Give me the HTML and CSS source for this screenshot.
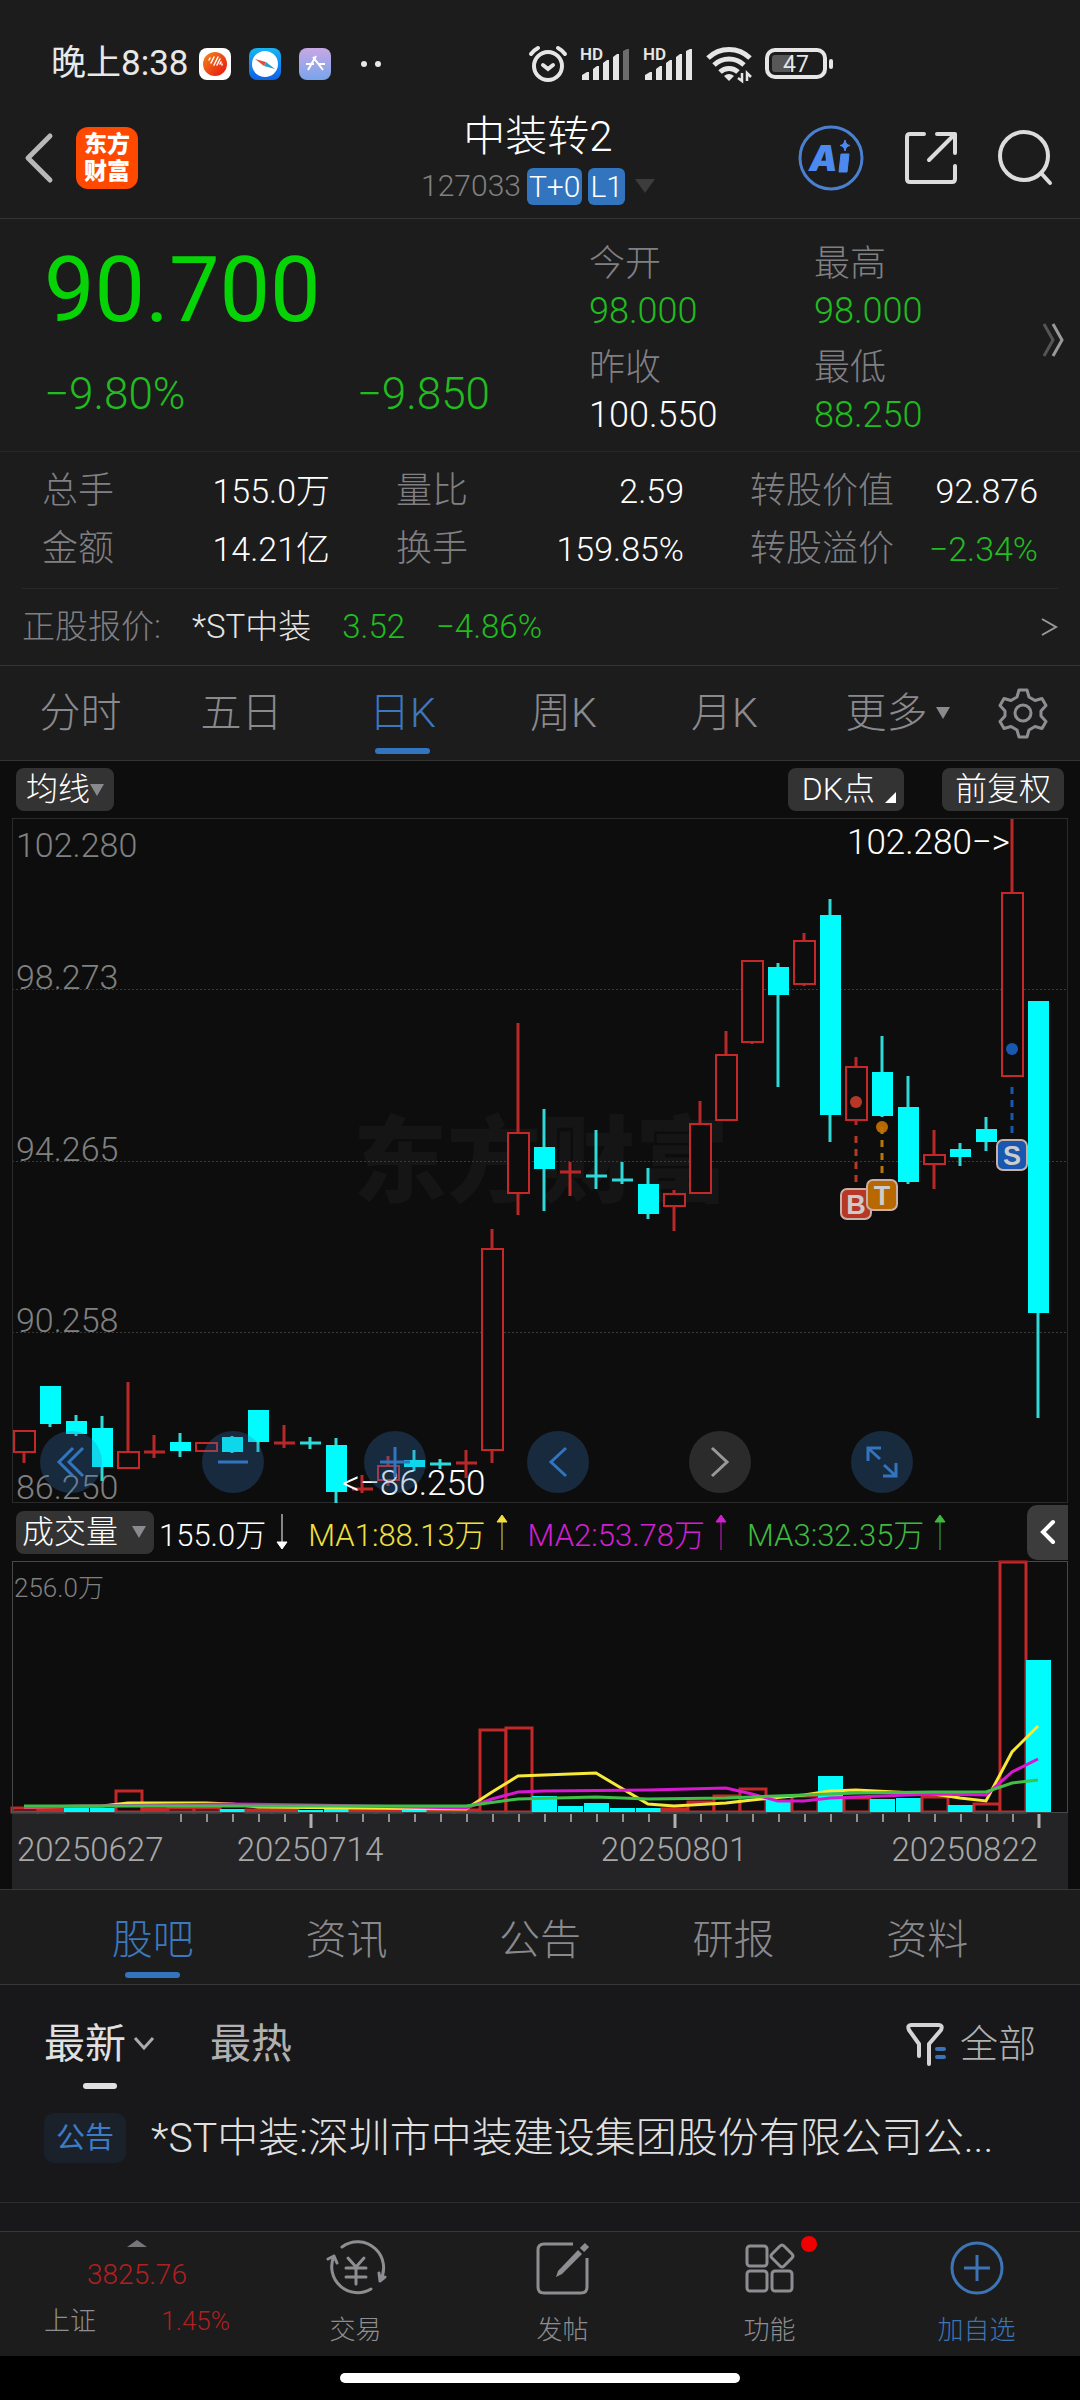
FILE: index.html
```html
<!DOCTYPE html>
<html lang="zh-CN">
<head>
  <meta charset="UTF-8">
  <meta name="viewport" content="width=device-width, initial-scale=1.0">
  <title>中装转2 127033</title>
  <link rel="stylesheet" href="styles.css">
</head>
<body>
  <div class="status-bar">
    <span class="clock">晚上8:38</span>
    <div class="status-apps">
      <svg width="32" height="32" viewBox="0 0 32 32">
        <defs>
          <linearGradient id="gOrange" x1="0" y1="0" x2="1" y2="1"><stop offset="0" stop-color="#f28a1a"/><stop offset="1" stop-color="#e81010"/></linearGradient>
          <linearGradient id="gBlue" x1="0" y1="0" x2="0" y2="1"><stop offset="0" stop-color="#18b4f4"/><stop offset="1" stop-color="#1060e8"/></linearGradient>
          <linearGradient id="gPurple" x1="0" y1="0" x2="0" y2="1"><stop offset="0" stop-color="#c8a8e4"/><stop offset="1" stop-color="#78a4ec"/></linearGradient>
        </defs>
        <rect width="32" height="32" rx="8" fill="#fff"/>
        <circle cx="16" cy="16" r="12" fill="url(#gOrange)"/>
        <path d="M10 12l1-2M12 15l3-6M15 17l4-8M18 17l3-6M21 16l1-2M23 17l0-1" stroke="#fff" stroke-width="1.5" stroke-linecap="round"/>
      </svg>
      <svg width="32" height="32" viewBox="0 0 32 32">
        <rect width="32" height="32" rx="8" fill="url(#gBlue)"/>
        <circle cx="16" cy="16" r="13" fill="#fff"/>
        <path d="M6 11l11 3-2 4z" fill="#e05040"/>
        <path d="M26 21l-11-3 2-4z" fill="#28a0c8"/>
      </svg>
      <svg width="32" height="32" viewBox="0 0 32 32">
        <rect width="32" height="32" rx="8" fill="url(#gPurple)"/>
        <path d="M17 8l-8 14M14 9l10 13M7 16h8M19 16h7" stroke="#fff" stroke-width="2" fill="none"/>
      </svg>
      <svg class="more-dots" width="20" height="32" viewBox="0 0 20 32" fill="#e8e8e8"><circle cx="3" cy="16" r="3"/><circle cx="17" cy="16" r="3"/></svg>
    </div>
    <div class="status-icons">
      <svg width="38" height="38" viewBox="0 0 38 38" fill="none" stroke="#e6e6e6" stroke-width="4" stroke-linecap="round">
        <circle cx="19" cy="21" r="14"/>
        <path d="M2 9a21 21 0 0 1 7-6M36 9a21 21 0 0 0-7-6M14 20l5 4 5-4"/>
      </svg>
      <svg width="50" height="34" viewBox="0 0 50 34" fill="#e6e6e6">
        <text x="0" y="13" class="hd">HD</text>
        <path d="M2 33v-5l5-3h2v8zM13 33V22l4-3h2v14zM23 33V16l4-3h2v20zM33 33V10l4-3h2v26z"/>
        <path d="M43 33V4l4-2h2v31z" fill="#6c6c6c"/>
      </svg>
      <svg width="50" height="34" viewBox="0 0 50 34" fill="#e6e6e6">
        <text x="0" y="13" class="hd">HD</text>
        <path d="M2 33v-5l5-3h2v8zM13 33V22l4-3h2v14zM23 33V16l4-3h2v20zM33 33V10l4-3h2v26zM43 33V4l4-2h2v31z"/>
      </svg>
      <svg width="46" height="36" viewBox="0 0 46 36" fill="none" stroke="#e6e6e6" stroke-width="5">
        <path d="M2 12a30 30 0 0 1 42 0M8 19a22 22 0 0 1 30 0M14 26a13 13 0 0 1 18 0"/>
        <path d="M18 30q5-4 10 0l-5 5z" fill="#e6e6e6" stroke="none"/>
        <path d="M36 27v8l-4-3M41 35v-8l4 4" stroke-width="2.500"/>
      </svg>
      <svg width="70" height="32" viewBox="0 0 70 32">
        <rect x="2" y="2" width="58" height="27" rx="8" fill="none" stroke="#e6e6e6" stroke-width="4"/>
        <path d="M7 10q0-3 3-3h15v17H10q-3 0-3-3z" fill="#585858"/>
        <rect x="64" y="11" width="4" height="10" rx="2" fill="#e6e6e6"/>
        <text x="31" y="24" class="battery-level">47</text>
      </svg>
    </div>
  </div>

  <header class="header">
    <div class="header-left">
      <button class="icon-btn" aria-label="返回">
        <svg width="30" height="52" viewBox="0 0 30 52" fill="none" stroke="#b8b8b8" stroke-width="5" stroke-linecap="round" stroke-linejoin="round"><path d="M26 4L4 26l22 22"/></svg>
      </button>
      <a class="logo" href="#" aria-label="东方财富"><span>东方</span><span>财富</span></a>
    </div>
    <div class="header-title">
      <h1>中装转2</h1>
      <div class="code">
        <span>127033</span>
        <span class="badge">T+0</span>
        <span class="badge">L1</span>
        <svg width="20" height="14" viewBox="0 0 20 14"><path d="M0 0h20L10 14z" fill="#3c3c3c"/></svg>
      </div>
    </div>
    <div class="header-right">
      <button class="icon-btn" aria-label="AI">
        <svg width="66" height="66" viewBox="0 0 66 66">
          <circle cx="33" cy="33" r="31" fill="none" stroke="#4b7fd0" stroke-width="3"/>
          <text x="11" y="46" class="ai">A</text>
          <path d="M43 29h8l-2 18h-8z" fill="#4d8af0" stroke="#4d8af0" stroke-linejoin="round"/>
          <path d="M47 15q1 5 5 5.500-4 .5-5 5.500-1-5-5-5.500 4-.5 5-5.500z" fill="#4d8af0" stroke="#4d8af0"/>
        </svg>
      </button>
      <button class="icon-btn" aria-label="分享">
        <svg width="54" height="54" viewBox="0 0 54 54" fill="none" stroke="#dcdcdc" stroke-width="4" stroke-linecap="round" stroke-linejoin="round"><path d="M20 3H6q-3 0-3 3v42q0 3 3 3h42q3 0 3-3V35M33 3h18v19M51 3L25 29"/></svg>
      </button>
      <button class="icon-btn" aria-label="搜索">
        <svg width="54" height="56" viewBox="0 0 54 56" fill="none" stroke="#dcdcdc" stroke-width="4" stroke-linecap="round"><circle cx="26" cy="26" r="24"/><path d="M43 43l9 10"/></svg>
      </button>
    </div>
  </header>

  <section class="quote">
    <div class="quote-main">
      <div class="price">90.700</div>
      <div class="change"><span>−9.80%</span><span>−9.850</span></div>
    </div>
    <dl class="quote-side">
      <div><dt>今开</dt><dd class="green">98.000</dd></div>
      <div><dt>最高</dt><dd class="green">98.000</dd></div>
      <div><dt>昨收</dt><dd>100.550</dd></div>
      <div><dt>最低</dt><dd class="green">88.250</dd></div>
    </dl>
    <button class="icon-btn" aria-label="更多行情">
      <svg width="24" height="34" viewBox="0 0 24 34" fill="none" stroke-width="3"><path d="M2 1l9 16-9 16" stroke="#555"/><path d="M11 1l9 16-9 16" stroke="#999"/></svg>
    </button>
  </section>

  <dl class="stats">
    <div><dt>总手</dt><dd>155.0万</dd></div>
    <div><dt>量比</dt><dd>2.59</dd></div>
    <div><dt>转股价值</dt><dd>92.876</dd></div>
    <div><dt>金额</dt><dd>14.21亿</dd></div>
    <div><dt>换手</dt><dd>159.85%</dd></div>
    <div><dt>转股溢价</dt><dd class="green">−2.34%</dd></div>
  </dl>

  <a class="underlying" href="#">
    <span class="underlying-label">正股报价:</span>
    <span class="underlying-name">*ST中装</span>
    <span class="green">3.52</span>
    <span class="green">−4.86%</span>
    <svg width="17" height="18" viewBox="0 0 17 18" fill="none" stroke="#999" stroke-width="2"><path d="M1 1l14 8-14 8"/></svg>
  </a>

  <nav class="periods">
    <button>分时</button>
    <button>五日</button>
    <button class="active">日K</button>
    <button>周K</button>
    <button>月K</button>
    <button class="period-more">更多<svg width="14" height="12" viewBox="0 0 14 12"><path d="M0 0h14L7 12z" fill="#8a8a8e"/></svg></button>
    <button class="settings" aria-label="设置">
      <svg width="50" height="50" viewBox="0 0 50 50" fill="none" stroke="#8e8e92" stroke-width="3" stroke-linejoin="round">
        <path d="M21 2h8l2 7 6 3.500 7-2 4 7-5 5.500v5l5 5.500-4 7-7-2-6 3.500-2 7h-8l-2-7-6-3.500-7 2-4-7 5-5.500v-5l-5-5.500 4-7 7 2 6-3.500z"/>
        <circle cx="25" cy="25" r="8"/>
      </svg>
    </button>
  </nav>

  <main class="chart">
    <div class="chart-toolbar">
      <button class="chip">均线<svg width="14" height="12" viewBox="0 0 14 12"><path d="M0 0h14L7 12z" fill="#8a8a8e"/></svg></button>
      <button class="chip chip-dk">DK点<svg width="11" height="11" viewBox="0 0 11 11"><path d="M11 0v11H0z" fill="#fff"/></svg></button>
      <button class="chip chip-adjust">前复权</button>
    </div>

    <div class="kline">
      <svg id="kline" viewBox="0 0 1056 685">
        <text x="341" y="377" class="watermark">东方财富</text>
        <path class="grid" d="M0 171.500h1056M0 343.500h1056M0 514.500h1056"/>
        <rect class="frame" x="0.5" y="0.5" width="1055" height="684"/>
        <g class="axis-label">
          <text x="4" y="39">102.280</text>
          <text x="4" y="171">98.273</text>
          <text x="4" y="343">94.265</text>
          <text x="4" y="514">90.258</text>
          <text x="4" y="681">86.250</text>
        </g>
        <g id="candles"></g>
        <g class="marker marker-b">
          <circle cx="844" cy="284" r="6"/>
          <path d="M844 318v52"/>
          <rect x="829" y="371" width="30" height="30" rx="6"/>
          <text x="844" y="396">B</text>
        </g>
        <g class="marker marker-t">
          <circle cx="870" cy="309" r="6"/>
          <path d="M870 309v52"/>
          <rect x="855" y="362" width="30" height="30" rx="6"/>
          <text x="870" y="387">T</text>
        </g>
        <g class="marker marker-s">
          <circle cx="1000" cy="231" r="6"/>
          <path d="M1000 269v52"/>
          <rect x="985" y="322" width="30" height="30" rx="6"/>
          <text x="1000" y="347">S</text>
        </g>
        <text x="998" y="36" class="peak peak-high">102.280−&gt;</text>
        <text x="330" y="677" class="peak">&lt;−86.250</text>
      </svg>
      <div class="chart-controls">
        <button aria-label="最前"><svg width="28" height="30" viewBox="0 0 28 30"><path d="M16 1L2 15l14 14M26 1L12 15l14 14"/></svg></button>
        <button aria-label="缩小"><svg width="30" height="30" viewBox="0 0 30 30"><path d="M0 15h30"/></svg></button>
        <button aria-label="放大"><svg width="30" height="30" viewBox="0 0 30 30"><path d="M0 15h30M15 0v30"/></svg></button>
        <button aria-label="左移"><svg width="20" height="30" viewBox="0 0 20 30"><path d="M18 1L3 15l15 14"/></svg></button>
        <button class="disabled" aria-label="右移"><svg width="20" height="30" viewBox="0 0 20 30"><path d="M2 1l15 14L2 29"/></svg></button>
        <button aria-label="全屏"><svg width="32" height="32" viewBox="0 0 32 32"><path d="M2 15V2h13M2 2l12 11M30 17v13H17M30 30L18 19"/></svg></button>
      </div>
    </div>

    <div class="volume-legend">
      <button class="chip chip-volume">成交量<svg width="14" height="12" viewBox="0 0 14 12"><path d="M0 0h14L7 12z" fill="#8a8a8e"/></svg></button>
      <span>155.0万<svg width="12" height="36" viewBox="0 0 12 36"><path d="M6 0v34M1 28l5 7 5-7z"/></svg></span>
      <span class="ma1">MA1:88.13万<svg width="12" height="36" viewBox="0 0 12 36"><path d="M6 36V2M1 8l5-7 5 7z"/></svg></span>
      <span class="ma2">MA2:53.78万<svg width="12" height="36" viewBox="0 0 12 36"><path d="M6 36V2M1 8l5-7 5 7z"/></svg></span>
      <span class="ma3">MA3:32.35万<svg width="12" height="36" viewBox="0 0 12 36"><path d="M6 36V2M1 8l5-7 5 7z"/></svg></span>
      <button class="collapse" aria-label="展开">
        <svg width="16" height="26" viewBox="0 0 16 26" fill="none" stroke="#fff" stroke-width="4" stroke-linecap="round"><path d="M13 3L3 13l10 10"/></svg>
      </button>
    </div>

    <svg class="volume" viewBox="0 0 1056 328">
      <rect class="axis-bg" x="0" y="252" width="1056" height="76"/>
      <g id="volumes"></g>
      <rect class="frame frame-volume" x="0.5" y="0.5" width="1055" height="251"/>
      <text x="2" y="36" class="volume-max">256.0万</text>
      <g id="averages"></g>
      <g id="ticks"></g>
      <g class="dates">
        <text x="5" y="300">20250627</text>
        <text x="298" y="300" text-anchor="middle">20250714</text>
        <text x="662" y="300" text-anchor="middle">20250801</text>
        <text x="1026" y="300" text-anchor="end">20250822</text>
      </g>
    </svg>
  </main>

  <nav class="sections">
    <a class="active" href="#">股吧</a>
    <a href="#">资讯</a>
    <a href="#">公告</a>
    <a href="#">研报</a>
    <a href="#">资料</a>
  </nav>

  <section class="feed">
    <div class="feed-tabs">
      <button class="active">最新<svg width="20" height="13" viewBox="0 0 20 13" fill="none" stroke="#aaa" stroke-width="3"><path d="M1 1l9 10 9-10"/></svg></button>
      <button>最热</button>
      <button class="filter">
        <svg width="40" height="44" viewBox="0 0 40 44" fill="none" stroke="#d4d4d4" stroke-width="4" stroke-linecap="round" stroke-linejoin="round">
          <path d="M13 34V22L3 8q-2-5 2-5h28q4 0 2 5L23 22v20"/>
          <path d="M31 27h7M31 35h7" stroke="#3a74b8"/>
        </svg>全部
      </button>
    </div>
    <a class="feed-item" href="#">
      <span class="tag">公告</span>
      <span class="feed-title">*ST中装:深圳市中装建设集团股份有限公司公...</span>
    </a>
  </section>

  <nav class="bottom-nav">
    <a class="index" href="#">
      <svg width="20" height="7" viewBox="0 0 20 7"><path d="M0 7L10 0l10 7z" fill="#77777b"/></svg>
      <span class="red">3825.76</span>
      <span class="index-row"><span>上证</span><span class="red">1.45%</span></span>
    </a>
    <a href="#">
      <svg width="60" height="56" viewBox="0 0 60 56" fill="none" stroke="#8e8e92" stroke-width="3" stroke-linecap="round">
        <path d="M16 7a26 26 0 0 1 38 34M54 41l5-4M54 41l-1-8M45 49A26 26 0 0 1 8 16M8 16l-6 3M8 16l3 7"/>
        <path d="M22 18l8 9 8-9M20 28h20M20 37h20M30 28v16"/>
      </svg>
      <span>交易</span>
    </a>
    <a href="#">
      <svg width="54" height="56" viewBox="0 0 54 56" fill="none" stroke="#8e8e92" stroke-width="3">
        <path d="M37 4H8q-6 0-6 6v37q0 6 6 6h37q6 0 6-6V18"/>
        <path d="M42 10L22 31l-2 6 6-3 20-20z" fill="#8e8e92" stroke="none"/>
        <path d="M46 10l5-5" stroke-width="6"/>
      </svg>
      <span>发帖</span>
    </a>
    <a href="#">
      <span class="icon-wrap">
        <svg width="50" height="56" viewBox="0 0 50 56" fill="none" stroke="#8e8e92" stroke-width="3">
          <rect x="2" y="6" width="20" height="20" rx="3"/>
          <rect x="2" y="31" width="20" height="20" rx="3"/>
          <rect x="27" y="31" width="20" height="20" rx="3"/>
          <path d="M35 6q2-2 4 0l8 8q2 2 0 4l-8 8q-2 2-4 0l-8-8q-2-2 0-4z"/>
        </svg>
        <i class="dot"></i>
      </span>
      <span>功能</span>
    </a>
    <a class="add" href="#">
      <svg width="54" height="56" viewBox="0 0 54 56" fill="none" stroke="#3d74b5" stroke-width="3"><circle cx="27" cy="28" r="25"/><path d="M14 28h26M27 15v26"/></svg>
      <span>加自选</span>
    </a>
  </nav>
  <div class="home-bar"><span></span></div>

  <script src="script.js"></script>
</body>
</html>
```
FILE: styles.css
```css
* {
  margin: 0;
  padding: 0;
  box-sizing: border-box;
}

body {
  font-family: Roboto, "Noto Sans CJK SC", sans-serif;
  font-weight: 300;
  background: #1c1c1c;
  color: #fff;
  min-height: 100vh;
  display: flex;
  flex-direction: column;
}

button {
  font: inherit;
  color: inherit;
  background: none;
  border: none;
  cursor: pointer;
}

a {
  color: inherit;
  text-decoration: none;
}

svg {
  display: block;
  flex-shrink: 0;
  overflow: visible;
}

.green {
  color: #20bc20;
}

.red {
  color: #b02020;
}

/* Status bar */
.status-bar {
  display: flex;
  align-items: center;
  padding: 40px 245px 0 51px;
  height: 88px;
  color: #e8e8e8;
}

.clock {
  font-size: 35px;
  line-height: 48px;
  font-weight: 400;
}

.status-apps {
  display: flex;
  gap: 18px;
  margin-left: 10px;
}

.more-dots {
  margin-left: 12px;
}

.status-icons {
  display: flex;
  align-items: center;
  gap: 13px;
  margin-left: auto;
}

.hd {
  font-size: 17px;
  font-weight: 600;
}

.battery-level {
  font-size: 23px;
  font-weight: 400;
  fill: #e6e6e6;
  text-anchor: middle;
}

/* Header */
.header {
  display: grid;
  grid-template-columns: 1fr auto 1fr;
  align-items: center;
  padding: 21px 28px 11px 24px;
  border-bottom: 1px solid #333;
}

.header-left,
.header-right {
  display: flex;
  align-items: center;
}

.header-left {
  gap: 22px;
}

.header-right {
  justify-content: flex-end;
  gap: 40px;
}

.logo {
  display: flex;
  flex-direction: column;
  justify-content: center;
  align-items: center;
  width: 62px;
  height: 62px;
  border-radius: 12px;
  background: #ff4800;
  font-size: 23px;
  line-height: 27px;
  font-weight: 900;
}

.header-title h1 {
  font-size: 42px;
  line-height: 56px;
  font-weight: 300;
  text-align: center;
}

.code {
  display: flex;
  align-items: center;
  gap: 6px;
  font-size: 30px;
  line-height: 42px;
  color: #808080;
}

.badge {
  padding: 0 2px;
  border-radius: 6px;
  background: #3275be;
  color: #fff;
  line-height: 37px;
}

.code svg {
  margin-left: 4px;
}

.ai {
  font-family: Inter, sans-serif;
  font-size: 36px;
  font-weight: 900;
  font-style: italic;
  fill: #4d8af0;
}

/* Quote */
.quote {
  display: flex;
  align-items: center;
  padding: 22px 14px 12px 44px;
  border-bottom: 1px solid #262626;
}

.quote-main {
  flex: 1;
  align-self: flex-start;
}

.price {
  font-size: 90px;
  line-height: 100px;
  font-weight: 400;
  color: #06d406;
}

.change {
  display: flex;
  justify-content: space-between;
  max-width: 446px;
  margin-top: 27px;
  font-size: 44px;
  line-height: 52px;
  color: #20bc20;
}

.quote-side {
  display: grid;
  grid-template-columns: 225px 228px;
  row-gap: 10px;
  font-size: 36px;
  line-height: 47px;
}

dt {
  color: #808084;
}

/* Stats */
.stats {
  display: grid;
  grid-template-columns: repeat(3, 1fr);
  column-gap: 66px;
  row-gap: 10px;
  margin: 0 22px;
  padding: 15px 20px;
  border-bottom: 1px solid #282828;
}

.stats div {
  display: flex;
  justify-content: space-between;
  align-items: center;
  line-height: 48px;
}

.stats dt {
  font-size: 36px;
}

.stats dd {
  font-size: 34px;
}

.underlying {
  display: flex;
  align-items: center;
  gap: 31px;
  padding: 15px 22px;
  font-size: 33px;
  line-height: 46px;
  border-bottom: 1px solid #333;
}

.underlying-label {
  color: #808084;
}

.underlying-name {
  color: #e4e4e4;
}

.underlying svg {
  margin-left: auto;
}

/* Period tabs */
.periods {
  display: flex;
  align-items: center;
  height: 95px;
  font-size: 41px;
  line-height: 56px;
  color: #8a8a8e;
  border-bottom: 1px solid #333;
}

.periods button {
  position: relative;
  flex: 161;
  height: 94px;
}

.periods .period-more {
  display: flex;
  flex: 185;
  align-items: center;
  justify-content: center;
  gap: 8px;
}

.periods .settings {
  flex: 90;
}

.settings svg {
  margin-left: 8px;
}

.periods .active,
.sections .active {
  color: #3b78bd;
}

.periods .active::after,
.sections .active::after {
  content: "";
  position: absolute;
  left: 50%;
  bottom: 6px;
  width: 55px;
  height: 6px;
  margin-left: -28px;
  border-radius: 3px;
  background: #3275be;
}

/* Chart */
.chart {
  padding: 7px 12px 0;
  background: #0d0d0d;
}

.chart-toolbar {
  display: flex;
  gap: 38px;
  padding: 0 4px 7px;
}

.chip {
  display: flex;
  align-items: center;
  padding: 0 10px;
  border-radius: 8px;
  background: #333;
  font-size: 32px;
  line-height: 43px;
}

.chip-adjust {
  padding: 0 13px;
}

.chip-dk {
  gap: 10px;
  margin-left: auto;
  padding: 0 8px 0 14px;
}

.chip-dk svg {
  align-self: flex-end;
  margin-bottom: 8px;
}

.kline {
  position: relative;
}

.kline > svg,
.volume {
  width: 100%;
  height: auto;
}

.frame {
  fill: none;
  stroke: #2a2a2a;
}

.frame-volume {
  stroke: #484848;
}

.grid {
  stroke: #3a3a3a;
  stroke-dasharray: 2 2;
}

.watermark {
  font-size: 94px;
  font-weight: 900;
  fill: #151515;
}

.axis-label {
  font-size: 34px;
  fill: #808080;
}

.peak {
  font-size: 35px;
  fill: #fff;
}

.peak-high {
  text-anchor: end;
}

.candle-up,
.volume-up {
  fill: #0d0d0d;
  stroke: #c42828;
  stroke-width: 2;
}

.volume-up {
  stroke-width: 3;
}

.candle-down,
.volume-down {
  fill: #00fcfc;
}

.wick-up {
  stroke: #b82828;
  stroke-width: 3;
}

.wick-down {
  stroke: #30d8d8;
  stroke-width: 3;
}

.marker path {
  stroke-width: 3;
  stroke-dasharray: 7 6;
}

.marker rect {
  stroke: #c8b0a8;
  stroke-width: 2;
}

.marker text {
  font-family: "Liberation Sans", sans-serif;
  font-size: 27px;
  font-weight: 700;
  fill: #ccc;
  text-anchor: middle;
}

.marker-b {
  fill: #b83828;
  stroke: #b83828;
}

.marker-t {
  fill: #b86800;
  stroke: #b87808;
}

.marker-s {
  fill: #1858b0;
  stroke: #1858b0;
}

.marker circle,
.marker text {
  stroke: none;
}

.chart-controls {
  position: absolute;
  left: 28px;
  right: 155px;
  bottom: 10px;
  display: flex;
  justify-content: space-between;
}

.chart-controls button {
  display: flex;
  align-items: center;
  justify-content: center;
  width: 62px;
  height: 62px;
  border-radius: 50%;
  background: rgba(50, 117, 190, 0.28);
}

.chart-controls path {
  fill: none;
  stroke: #3275be;
  stroke-width: 3;
}

.chart-controls .disabled {
  background: #2b2b2b;
}

.chart-controls .disabled path {
  stroke: #999;
}

/* Volume */
.volume-legend {
  display: flex;
  align-items: center;
  height: 58px;
  padding-left: 4px;
  font-size: 31px;
}

.chip-volume {
  gap: 14px;
  margin-right: 5px;
  padding: 0 8px 0 6px;
}

.volume-legend span {
  display: flex;
  align-items: center;
  gap: 10px;
  margin-right: 20px;
}

.volume-legend span path {
  fill: currentColor;
  stroke: currentColor;
}

.ma1 {
  color: #f0e040;
}

.ma2 {
  color: #d020d0;
}

.ma3 {
  color: #40b840;
}

.collapse {
  display: flex;
  align-items: center;
  justify-content: center;
  width: 41px;
  height: 55px;
  margin-left: auto;
  border-radius: 10px 0 0 10px;
  background: #3c3c3c;
}

.axis-bg {
  fill: #242426;
}

.volume-max {
  font-size: 26px;
  fill: #808080;
}

.dates {
  font-size: 33px;
  fill: #a8a8a8;
}

.average {
  fill: none;
  stroke-width: 3;
}

.average-1 {
  stroke: #f8e838;
}

.average-2 {
  stroke: #d818d0;
}

.average-3 {
  stroke: #40c048;
}

.tick {
  stroke: #909090;
  stroke-width: 2;
}

.tick-major {
  stroke: #b0b0b0;
  stroke-width: 3;
}

/* Section tabs */
.sections {
  display: flex;
  padding: 0 56px;
  border-top: 1px solid #383838;
  border-bottom: 1px solid #383838;
  font-size: 41px;
  line-height: 88px;
  text-align: center;
  color: #8a8a8e;
}

.sections a {
  position: relative;
  flex: 1;
  padding-top: 6px;
}

/* Feed */
.feed {
  flex: 1;
  background: #18181a;
}

.feed-tabs {
  display: flex;
  gap: 56px;
  padding: 0 44px;
  font-size: 41px;
  line-height: 56px;
  color: #b0b0b0;
}

.feed-tabs button {
  position: relative;
  display: flex;
  align-items: center;
  gap: 8px;
  height: 117px;
  font-weight: 400;
}

.feed-tabs .active {
  color: #e0e0e0;
}

.feed-tabs .active::after {
  content: "";
  position: absolute;
  left: 39px;
  bottom: 13px;
  width: 34px;
  height: 6px;
  border-radius: 3px;
  background: #e0e0e0;
}

.feed-tabs .filter {
  gap: 14px;
  margin-left: auto;
  font-size: 38px;
  font-weight: 300;
}

.feed-item {
  display: flex;
  align-items: center;
  gap: 25px;
  padding: 8px 44px 36px;
  border-bottom: 1px solid #2c2c2e;
  line-height: 56px;
}

.tag {
  padding: 0 12px;
  border-radius: 10px;
  background: #1a212b;
  color: #3d7bc4;
  font-size: 29px;
  line-height: 50px;
  font-weight: 400;
  white-space: nowrap;
}

.feed-title {
  font-size: 41px;
  color: #e0e0e0;
  white-space: nowrap;
  overflow: hidden;
  text-overflow: ellipsis;
}

/* Bottom nav */
.bottom-nav {
  display: flex;
  border-top: 1px solid #383838;
  font-size: 26px;
  line-height: 36px;
  color: #8e8e92;
}

.bottom-nav a {
  display: flex;
  flex: 207;
  flex-direction: column;
  align-items: center;
  justify-content: space-between;
  padding: 8px 0;
  height: 124px;
}

.bottom-nav .index {
  flex: 186;
  padding: 8px 22px 17px 44px;
}

.bottom-nav .index > .red {
  font-size: 28px;
}

.index-row {
  display: flex;
  justify-content: space-between;
  align-self: stretch;
}

.icon-wrap {
  position: relative;
}

.dot {
  position: absolute;
  top: -4px;
  right: -22px;
  width: 16px;
  height: 16px;
  border-radius: 50%;
  background: #f00000;
}

.add {
  color: #3d74b5;
}

.home-bar {
  padding: 17px 0;
  background: #000;
}

.home-bar span {
  display: block;
  width: 37%;
  height: 10px;
  margin: 0 auto;
  border-radius: 5px;
  background: #fff;
}
```
FILE: script.js
```js
const NS = 'http://www.w3.org/2000/svg';
const STEP = 26;
const FIRST = 12;

// [direction, high, body top, body bottom, low]
const candles = [
  ['up', 613, 613, 634, 645], ['down', 568, 568, 606, 609], ['down', 597, 603, 616, 618],
  ['down', 598, 610, 649, 663], ['up', 564, 634, 650, 651], ['up', 617, 634, 634, 640],
  ['down', 615, 624, 633, 639], ['up', 625, 625, 633, 634], ['down', 618, 619, 634, 635],
  ['down', 592, 592, 624, 634], ['up', 607, 625, 625, 630], ['down', 619, 625, 625, 631],
  ['down', 620, 627, 674, 685], ['up', 657, 671, 671, 675], ['up', 638, 648, 662, 668],
  ['down', 632, 642, 649, 653], ['down', 641, 646, 646, 651], ['up', 632, 645, 645, 660],
  ['up', 411, 431, 632, 645], ['up', 205, 315, 375, 397], ['down', 291, 329, 351, 393],
  ['up', 344, 354, 354, 378], ['down', 312, 358, 358, 371], ['down', 344, 362, 362, 366],
  ['down', 350, 366, 396, 401], ['up', 372, 376, 388, 413], ['up', 283, 306, 375, 376],
  ['up', 213, 237, 302, 303], ['up', 142, 143, 224, 226], ['down', 145, 149, 177, 269],
  ['up', 115, 123, 166, 168], ['down', 81, 97, 297, 324], ['up', 239, 249, 302, 307],
  ['down', 218, 254, 298, 299], ['down', 258, 289, 364, 366], ['up', 312, 337, 346, 371],
  ['down', 325, 331, 339, 348], ['down', 299, 311, 324, 333], ['up', 1, 75, 258, 259],
  ['down', 183, 183, 495, 600]
];

// [direction, bar top]
const volumes = [
  ['up', 247], ['up', 248], ['down', 247], ['down', 247], ['up', 230], ['up', 248], ['up', 247],
  ['up', 247], ['down', 248], ['up', 249], ['up', 249], ['down', 249], ['down', 248], ['up', 249],
  ['up', 249], ['down', 249], ['up', 249], ['up', 249], ['up', 169], ['up', 167], ['down', 235],
  ['down', 245], ['down', 242], ['down', 247], ['down', 247], ['up', 248], ['up', 241], ['up', 235],
  ['up', 228], ['down', 239], ['up', 235], ['down', 215], ['up', 237], ['down', 238], ['down', 237],
  ['up', 236], ['down', 244], ['up', 243], ['up', 1], ['down', 99]
];

// [candle index, y]
const averages = [
  [[0, 246], [3, 245], [4, 242], [7, 242], [8, 243], [9, 246], [17, 248], [18, 231], [19, 215],
    [22, 212], [24, 243], [25, 245], [27, 242], [28, 239], [30, 234], [31, 230], [32, 229],
    [35, 233], [36, 237], [37, 240], [38, 191], [39, 165]],
  [[0, 246], [8, 243], [11, 244], [17, 247], [18, 238], [19, 231], [20, 230], [24, 229], [27, 227],
    [28, 233], [29, 240], [30, 240], [31, 237], [35, 233], [37, 234], [38, 211], [39, 198]],
  [[0, 245], [17, 245], [19, 238], [22, 236], [24, 238], [27, 237], [30, 234], [32, 232],
    [35, 231], [37, 231], [38, 222], [39, 219]]
];

function draw(parent, tag, attrs) {
  const el = document.createElementNS(NS, tag);
  for (const name in attrs) el.setAttribute(name, attrs[name]);
  document.getElementById(parent).appendChild(el);
}

candles.forEach(([dir, high, top, bottom, low], i) => {
  const x = FIRST + STEP * i;
  draw('candles', 'path', { class: `wick-${dir}`, d: `M${x} ${high}V${low}` });
  if (top === bottom) {
    draw('candles', 'path', { class: `wick-${dir}`, d: `M${x - 10} ${top}h21` });
  } else {
    draw('candles', 'rect', {
      class: `candle-${dir}`, x: x - 10, y: top, width: 21, height: bottom - top
    });
  }
});

volumes.forEach(([dir, top], i) => {
  const x = FIRST + STEP * i;
  draw('volumes', 'rect', {
    class: `volume-${dir}`, x: x - 12, y: top, width: dir === 'up' ? 26 : 25, height: 251 - top
  });
});

averages.forEach((line, n) => {
  const points = line.map(([i, y]) => `${FIRST + STEP * i},${y}`).join(' ');
  draw('averages', 'polyline', { class: `average average-${n + 1}`, points });
});

for (let i = 6; i < candles.length; i++) {
  const x = FIRST + STEP * i + 1;
  const major = i === 11 || i === 25 || i === 39;
  draw('ticks', 'path', { class: major ? 'tick-major' : 'tick', d: `M${x} 253v${major ? 14 : 8}` });
}
```
